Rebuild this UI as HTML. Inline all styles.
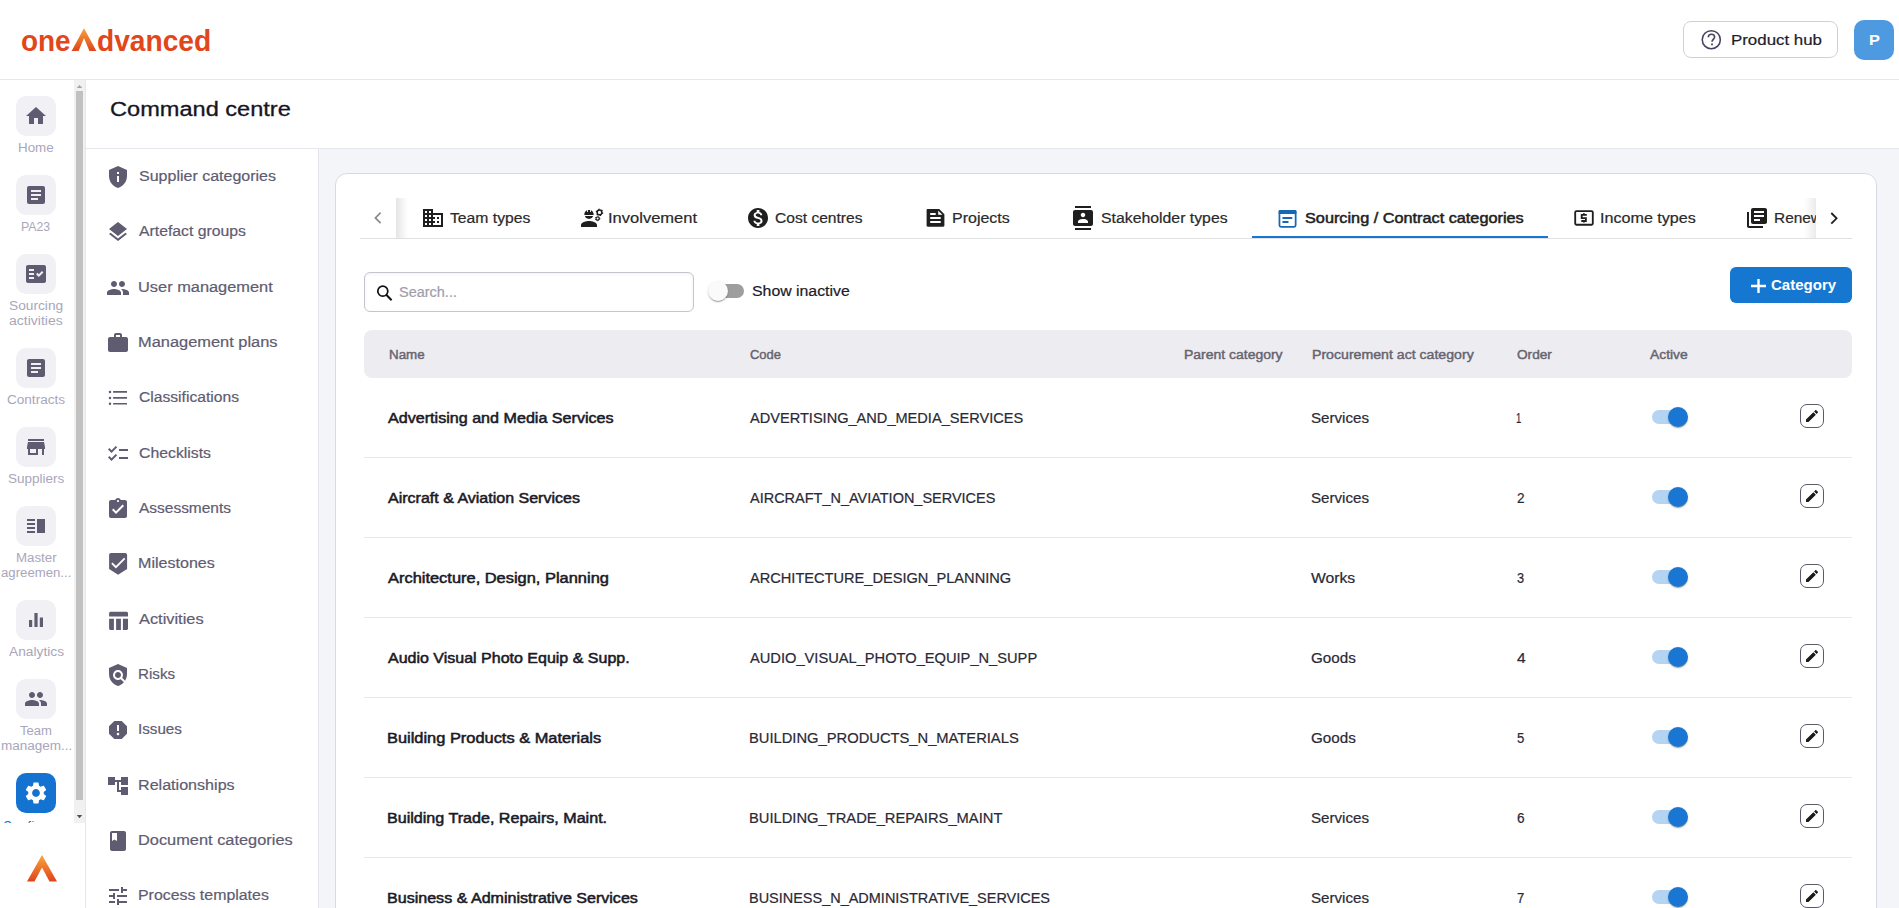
<!DOCTYPE html>
<html><head><meta charset="utf-8">
<style>
*{margin:0;padding:0;box-sizing:border-box}
html,body{width:1899px;height:908px;overflow:hidden;background:#fff;font-family:"Liberation Sans",sans-serif}
.a{position:absolute}
.t{position:absolute;white-space:nowrap}
svg{position:absolute;display:block}
</style></head><body>
<!-- header -->
<div class="a" style="left:0;top:79px;width:1899px;height:1px;background:#e6e6ef"></div>
<!-- rail -->
<div class="a" style="left:85px;top:80px;width:1px;height:828px;background:#e6e6ef"></div>
<!-- title bar -->
<div class="a" style="left:86px;top:148px;width:1813px;height:1px;background:#e6e6ef"></div>
<!-- submenu border -->
<div class="a" style="left:318px;top:149px;width:1px;height:759px;background:#e6e6ef"></div>
<!-- content bg -->
<div class="a" style="left:319px;top:149px;width:1580px;height:759px;background:#f4f5f9"></div>
<!-- card -->
<div class="a" style="left:335px;top:173px;width:1542px;height:760px;background:#fff;border:1px solid #d9d9e6;border-radius:12px"></div>
<svg style="left:0;top:0" width="120" height="60" viewBox="0 0 120 60">
<defs><linearGradient id="lg" x1="0" y1="0" x2="0" y2="1"><stop offset="0" stop-color="#f7a23b"/><stop offset="1" stop-color="#e1441c"/></linearGradient></defs>
<path d="M71.6 51 L84 28.2 L96.4 51 L89.4 51 L84 38 L78.6 51 Z" fill="url(#lg)"/>
</svg>
<div class="a" style="left:1683px;top:21px;width:155px;height:37px;border:1px solid #cfd0de;border-radius:8px;background:#fff"></div>
<svg style="left:1700px;top:28px;" width="24" height="24" viewBox="0 0 24 24"><circle cx="11.3" cy="11.7" r="9.05" fill="none" stroke="#474360" stroke-width="1.55"/><path d="M8.3 9.3 C8.3 7.3 9.8 6.2 11.5 6.2 C13.3 6.2 14.6 7.4 14.6 9 C14.6 10.9 12.2 11.3 12 13.8" fill="none" stroke="#474360" stroke-width="1.6"/><rect x="11.1" y="15.5" width="1.8" height="1.8" fill="#474360"/></svg>
<div class="a" style="left:1854px;top:20px;width:40px;height:40px;background:#4d9ae0;border-radius:10px"></div>
<div class="a" style="left:16px;top:96px;width:40px;height:40px;background:#f1f0f5;border-radius:10px"></div>
<svg style="left:24px;top:104px;" width="24" height="24" viewBox="0 0 24 24"><path fill="#5f5c72" d="M10 20v-6h4v6h5v-8h3L12 3 2 12h3v8z"/></svg>
<div class="a" style="left:16px;top:175px;width:40px;height:40px;background:#f1f0f5;border-radius:10px"></div>
<svg style="left:24px;top:183px;" width="24" height="24" viewBox="0 0 24 24"><path fill="#5f5c72" d="M19 3H5c-1.1 0-2 .9-2 2v14c0 1.1.9 2 2 2h14c1.1 0 2-.9 2-2V5c0-1.1-.9-2-2-2zm-5 14H7v-2h7v2zm3-4H7v-2h10v2zm0-4H7V7h10v2z"/></svg>
<div class="a" style="left:16px;top:254px;width:40px;height:40px;background:#f1f0f5;border-radius:10px"></div>
<svg style="left:24px;top:262px;" width="24" height="24" viewBox="0 0 24 24"><path fill="#5f5c72" d="M20 3H4c-1.1 0-2 .9-2 2v14c0 1.1.9 2 2 2h16c1.1 0 2-.9 2-2V5c0-1.1-.9-2-2-2zM10 17H5v-2h5v2zm0-4H5v-2h5v2zm0-4H5V7h5v2zm4.82 6L12 12.16l1.41-1.41 1.41 1.42L17.99 9l1.42 1.42L14.82 15z"/></svg>
<div class="a" style="left:16px;top:348px;width:40px;height:40px;background:#f1f0f5;border-radius:10px"></div>
<svg style="left:24px;top:356px;" width="24" height="24" viewBox="0 0 24 24"><path fill="#5f5c72" d="M19 3H5c-1.1 0-2 .9-2 2v14c0 1.1.9 2 2 2h14c1.1 0 2-.9 2-2V5c0-1.1-.9-2-2-2zm-5 14H7v-2h7v2zm3-4H7v-2h10v2zm0-4H7V7h10v2z"/></svg>
<div class="a" style="left:16px;top:427px;width:40px;height:40px;background:#f1f0f5;border-radius:10px"></div>
<svg style="left:24px;top:435px;" width="24" height="24" viewBox="0 0 24 24"><path fill="#5f5c72" d="M20 4H4v2h16V4zm1 10v-2l-1-5H4l-1 5v2h1v6h10v-6h4v6h2v-6h1zm-9 4H6v-4h6v4z"/></svg>
<div class="a" style="left:16px;top:506px;width:40px;height:40px;background:#f1f0f5;border-radius:10px"></div>
<svg style="left:24px;top:514px;" width="24" height="24" viewBox="0 0 24 24"><path fill="#5f5c72" d="M3 15h8v-2H3v2zm0 4h8v-2H3v2zm0-8h8V9H3v2zm0-6v2h8V5H3zm10 0h8v14h-8V5z"/></svg>
<div class="a" style="left:16px;top:600px;width:40px;height:40px;background:#f1f0f5;border-radius:10px"></div>
<svg style="left:24px;top:608px;" width="24" height="24" viewBox="0 0 24 24"><path fill="#5f5c72" d="M5 12h3.2v7H5zM10.4 5h3.2v14h-3.2zM15.8 9.5H19V19h-3.2z"/></svg>
<div class="a" style="left:16px;top:679px;width:40px;height:40px;background:#f1f0f5;border-radius:10px"></div>
<svg style="left:24px;top:687px;" width="24" height="24" viewBox="0 0 24 24"><path fill="#5f5c72" d="M16 11c1.66 0 2.99-1.34 2.99-3S17.66 5 16 5c-1.66 0-3 1.34-3 3s1.34 3 3 3zm-8 0c1.66 0 2.99-1.34 2.99-3S9.66 5 8 5C6.34 5 5 6.34 5 8s1.34 3 3 3zm0 2c-2.33 0-7 1.17-7 3.5V19h14v-2.5c0-2.33-4.67-3.5-7-3.5zm8 0c-.29 0-.62.02-.97.05 1.16.84 1.97 1.97 1.97 3.45V19h6v-2.5c0-2.33-4.67-3.5-7-3.5z"/></svg>
<div class="a" style="left:16px;top:773px;width:40px;height:40px;background:#1473d0;border-radius:10px"></div>
<svg style="left:23px;top:780px;" width="26" height="26" viewBox="0 0 24 24"><path fill="#ffffff" d="M19.14 12.94c.04-.3.06-.61.06-.94 0-.32-.02-.64-.07-.94l2.03-1.58c.18-.14.23-.41.12-.61l-1.92-3.32c-.12-.22-.37-.29-.59-.22l-2.39.96c-.5-.38-1.03-.7-1.62-.94l-.36-2.54c-.04-.24-.24-.41-.48-.41h-3.84c-.24 0-.43.17-.47.41l-.36 2.54c-.59.24-1.13.57-1.62.94l-2.39-.96c-.22-.08-.47 0-.59.22L2.74 8.87c-.12.21-.08.47.12.61l2.03 1.58c-.05.3-.09.63-.09.94s.02.64.07.94l-2.03 1.58c-.18.14-.23.41-.12.61l1.92 3.32c.12.22.37.29.59.22l2.39-.96c.5.38 1.03.7 1.62.94l.36 2.54c.05.24.24.41.48.41h3.84c.24 0 .44-.17.47-.41l.36-2.54c.59-.24 1.13-.56 1.62-.94l2.39.96c.22.08.47 0 .59-.22l1.92-3.32c.12-.22.07-.47-.12-.61l-2.01-1.58zM12 15.6c-1.98 0-3.6-1.62-3.6-3.6s1.62-3.6 3.6-3.6 3.6 1.62 3.6 3.6-1.62 3.6-3.6 3.6z"/></svg>
<div class="a" style="left:0;top:80px;width:74px;height:743px;overflow:hidden"><div class="t" style="left:3px;top:739.5px;font:400 12px/12px 'Liberation Sans',sans-serif;color:#1473d0;letter-spacing:0.8px">Configure</div></div>
<div class="a" style="left:74px;top:80px;width:11px;height:743px;background:#f1f1f1;"></div>
<div class="a" style="left:76px;top:91px;width:7px;height:709px;background:#c1c1c1;"></div>
<svg style="left:75px;top:84px;" width="9" height="6" viewBox="0 0 9 6"><path d="M1.8 4 L4.5 1 L7.2 4 Z" fill="#a3a3a3"/></svg>
<svg style="left:75px;top:814px;" width="9" height="6" viewBox="0 0 9 6"><path d="M1.8 1 L4.5 4.2 L7.2 1 Z" fill="#505050"/></svg>
<svg style="left:26px;top:854px" width="32" height="29" viewBox="0 0 32 29">
<defs><linearGradient id="lg2" x1="0" y1="0" x2="0" y2="1"><stop offset="0" stop-color="#f9a63c"/><stop offset="1" stop-color="#e0431b"/></linearGradient></defs>
<path d="M1 27.5 L16 1 L31 27.5 L23.5 27.5 L16 13.5 L8.5 27.5 Z" fill="url(#lg2)"/></svg>
<svg style="left:106px;top:165px;" width="24" height="24" viewBox="0 0 24 24"><path fill="#5f5c72" d="M12 1L3 5v6c0 5.55 3.84 10.74 9 12 5.16-1.26 9-6.45 9-12V5l-9-4zm1 16h-2v-6h2v6zm0-8h-2V7h2v2z"/></svg>
<svg style="left:106px;top:220px;" width="24" height="24" viewBox="0 0 24 24"><path fill="#5f5c72" d="M11.99 18.54l-7.37-5.73L3 14.07l9 7 9-7-1.63-1.27-7.38 5.74zM12 16l7.36-5.73L21 9l-9-7-9 7 1.63 1.27L12 16z"/></svg>
<svg style="left:106px;top:276px;" width="24" height="24" viewBox="0 0 24 24"><path fill="#5f5c72" d="M16 11c1.66 0 2.99-1.34 2.99-3S17.66 5 16 5c-1.66 0-3 1.34-3 3s1.34 3 3 3zm-8 0c1.66 0 2.99-1.34 2.99-3S9.66 5 8 5C6.34 5 5 6.34 5 8s1.34 3 3 3zm0 2c-2.33 0-7 1.17-7 3.5V19h14v-2.5c0-2.33-4.67-3.5-7-3.5zm8 0c-.29 0-.62.02-.97.05 1.16.84 1.97 1.97 1.97 3.45V19h6v-2.5c0-2.33-4.67-3.5-7-3.5z"/></svg>
<svg style="left:106px;top:331px;" width="24" height="24" viewBox="0 0 24 24"><path fill="#5f5c72" d="M20 6h-4V4c0-1.11-.89-2-2-2h-4c-1.11 0-2 .89-2 2v2H4c-1.11 0-1.99.89-1.99 2L2 19c0 1.11.89 2 2 2h16c1.11 0 2-.89 2-2V8c0-1.11-.89-2-2-2zm-6 0h-4V4h4v2z"/></svg>
<svg style="left:106px;top:385px;" width="24" height="24" viewBox="0 0 24 24"><path fill="#5f5c72" d="M4 5.65a1.25 1.25 0 1 0 0 2.5a1.25 1.25 0 1 0 0-2.5zM4 11.65a1.25 1.25 0 1 0 0 2.5a1.25 1.25 0 1 0 0-2.5zM4 17.55a1.25 1.25 0 1 0 0 2.5a1.25 1.25 0 1 0 0-2.5zM7.1 6.1h13.9v1.6H7.1zM7.1 12.1h13.9v1.6H7.1zM7.1 18h13.9v1.6H7.1z"/></svg>
<svg style="left:106px;top:442px;" width="24" height="24" viewBox="0 0 24 24"><path fill="#5f5c72" d="M22 7h-9v2h9V7zm0 8h-9v2h9v-2zM5.54 11L2 7.46l1.41-1.41 2.12 2.12 4.24-4.24 1.41 1.41L5.54 11zm0 8L2 15.46l1.41-1.41 2.12 2.12 4.24-4.24 1.41 1.41L5.54 19z"/></svg>
<svg style="left:106px;top:497px;" width="24" height="24" viewBox="0 0 24 24"><path fill="#5f5c72" d="M19 3h-4.18C14.4 1.84 13.3 1 12 1c-1.3 0-2.4.84-2.82 2H5c-1.1 0-2 .9-2 2v14c0 1.1.9 2 2 2h14c1.1 0 2-.9 2-2V5c0-1.1-.9-2-2-2zm-7 0c.55 0 1 .45 1 1s-.45 1-1 1-1-.45-1-1 .45-1 1-1zm-2 14l-4-4 1.41-1.41L10 14.17l6.59-6.59L18 9l-8 8z"/></svg>
<svg style="left:106px;top:551px;" width="24" height="24" viewBox="0 0 24 24"><path fill="#5f5c72" d="M5 2.1h14.2c1 0 1.9.9 1.9 1.9v13.9l-9 5.8-9-5.8V4c0-1 .9-1.9 1.9-1.9z"/><path d="M5.9 12.2L9.9 16.2L18.7 7.4" fill="none" stroke="#fff" stroke-width="1.8"/></svg>
<svg style="left:106px;top:608px;" width="24" height="24" viewBox="0 0 24 24"><path fill="#5f5c72" d="M3.1 5.3c0-.8.7-1.5 1.5-1.5h15.9c.8 0 1.5.7 1.5 1.5v3.3H3.1zM3.1 10.8h4.8v11.1H4.6c-.8 0-1.5-.7-1.5-1.5zM10.1 10.8h4.8v11.1h-4.8zM16.9 10.8H22v9.6c0 .8-.7 1.5-1.5 1.5h-3.6z"/></svg>
<svg style="left:106px;top:663px;" width="24" height="24" viewBox="0 0 24 24"><path fill="#5f5c72" d="M21 5l-9-4-9 4v6c0 5.55 3.84 10.74 9 12 2.3-.56 4.33-1.9 5.88-3.71l-3.12-3.12c-1.94 1.29-4.58 1.07-6.29-.64-1.95-1.95-1.95-5.12 0-7.07 1.95-1.95 5.12-1.95 7.07 0 1.71 1.71 1.92 4.35.64 6.29l2.9 2.9C20.29 15.69 21 13.38 21 11V5zM12 15c1.66 0 3-1.34 3-3s-1.34-3-3-3-3 1.34-3 3 1.34 3 3 3z"/></svg>
<svg style="left:106px;top:718px;" width="24" height="24" viewBox="0 0 24 24"><path fill="#5f5c72" d="M15.73 3H8.27L3 8.27v7.46L8.27 21h7.46L21 15.73V8.27L15.73 3zM12 17.3c-.72 0-1.3-.58-1.3-1.3 0-.72.58-1.3 1.3-1.3.72 0 1.3.58 1.3 1.3 0 .72-.58 1.3-1.3 1.3zm1-4.3h-2V7h2v6z"/></svg>
<svg style="left:106px;top:774px;" width="24" height="24" viewBox="0 0 24 24"><path fill="#5f5c72" d="M22 11V3h-7v3H9V3H2v8h7V8h2v10h4v3h7v-8h-7v3h-2V8h2v3z"/></svg>
<svg style="left:106px;top:829px;" width="24" height="24" viewBox="0 0 24 24"><path fill="#5f5c72" d="M18 2H6c-1.1 0-2 .9-2 2v16c0 1.1.9 2 2 2h12c1.1 0 2-.9 2-2V4c0-1.1-.9-2-2-2zM6 4h5v8l-2.5-1.5L6 12V4z"/></svg>
<svg style="left:106px;top:884px;" width="24" height="24" viewBox="0 0 24 24"><path fill="#5f5c72" d="M3 17v2h6v-2H3zM3 5v2h10V5H3zm10 16v-2h8v-2h-8v-2h-2v6h2zM7 9v2H3v2h4v2h2V9H7zm14 4v-2H11v2h10zm-6-4h2V7h4V5h-4V3h-2v6z"/></svg>
<div class="a" style="left:360px;top:238px;width:1492px;height:1px;background:#e0e0e0;"></div>
<svg style="left:370px;top:208px;" width="16" height="20" viewBox="0 0 16 20"><path d="M10.6 4.7 L5.4 9.9 L10.6 15.1" fill="none" stroke="#8a8a8a" stroke-width="1.7"/></svg>
<div class="a" style="left:396px;top:198px;width:12px;height:40px;background:linear-gradient(90deg,rgba(0,0,0,0.10),rgba(0,0,0,0))"></div>
<svg style="left:421px;top:206px;" width="24" height="24" viewBox="0 0 24 24"><path fill="#1f1f1f" d="M12 7V3H2v18h20V7H12zM6 19H4v-2h2v2zm0-4H4v-2h2v2zm0-4H4V9h2v2zm0-4H4V5h2v2zm4 12H8v-2h2v2zm0-4H8v-2h2v2zm0-4H8V9h2v2zm0-4H8V5h2v2zm10 12h-8v-2h2v-2h-2v-2h2v-2h-2V9h8v10zm-2-8h-2v2h2v-2zm0 4h-2v2h2v-2z"/></svg>
<svg style="left:580px;top:206px;" width="24" height="24" viewBox="0 0 24 24"><path fill="#1f1f1f" d="M4.3 8.9h9.4c0-2.1-1.1-3.9-2.7-4.6v1.6h-.9V4.1c-.4-.1-.7-.1-1.1-.1s-.7 0-1.1.1v1.8h-.9V4.3C5.4 5 4.3 6.8 4.3 8.9zM5 10.1h8c0 1.6-1.8 2.8-4 2.8s-4-1.2-4-2.8zM9 15c-2.67 0-8 1.34-8 4v2h16v-2c0-2.66-5.33-4-8-4z"/><circle cx="19.5" cy="6.4" r="2.35" fill="none" stroke="#1f1f1f" stroke-width="1.5"/><circle cx="19.5" cy="6.4" r="3.15" fill="none" stroke="#1f1f1f" stroke-width="1.3" stroke-dasharray="1.3 2.0"/><circle cx="17.6" cy="12.6" r="1.6" fill="none" stroke="#1f1f1f" stroke-width="1.2"/><circle cx="17.6" cy="12.6" r="2.2" fill="none" stroke="#1f1f1f" stroke-width="1" stroke-dasharray="1 1.3"/></svg>
<svg style="left:746px;top:206px;" width="24" height="24" viewBox="0 0 24 24"><path fill="#1f1f1f" d="M12 2C6.48 2 2 6.48 2 12s4.48 10 10 10 10-4.48 10-10S17.52 2 12 2zm1.41 16.09V20h-2.67v-1.93c-1.71-.36-3.16-1.46-3.27-3.4h1.96c.1 1.05.82 1.87 2.65 1.87 1.96 0 2.4-.98 2.4-1.59 0-.83-.44-1.61-2.67-2.14-2.48-.6-4.18-1.62-4.18-3.67 0-1.72 1.39-2.84 3.11-3.21V4h2.67v1.95c1.86.45 2.79 1.86 2.85 3.39H14.3c-.05-1.11-.64-1.87-2.22-1.87-1.5 0-2.4.68-2.4 1.64 0 .84.65 1.39 2.67 1.91s4.18 1.39 4.18 3.91c-.01 1.83-1.38 2.83-3.12 3.16z"/></svg>
<svg style="left:920px;top:204px;" width="30" height="28" viewBox="0 0 30 28"><path fill="#1f1f1f" d="M7.8 4.9h11.4l5.2 5.4v11.3c0 .7-.5 1.2-1.2 1.2H7.8c-.7 0-1.2-.5-1.2-1.2V6.1c0-.7.5-1.2 1.2-1.2z"/><path fill="#fff" d="M10.2 9.1h5.5v1.8h-5.5zM10.2 13.1h10.5v1.9H10.2zM10.2 17.1h10.5v1.9H10.2zM18.2 6.8l4.3 4H18.2z"/></svg>
<svg style="left:1071px;top:206px;" width="24" height="24" viewBox="0 0 24 24"><path fill="#1f1f1f" d="M20 0H4v2h16V0zM4 24h16v-2H4v2zM20 4H4c-1.1 0-2 .9-2 2v12c0 1.1.9 2 2 2h16c1.1 0 2-.9 2-2V6c0-1.1-.9-2-2-2zm-8 2.75c1.24 0 2.25 1.01 2.25 2.25s-1.01 2.25-2.25 2.25S9.75 10.24 9.75 9 10.76 6.75 12 6.75zM17 17H7v-1.5c0-1.67 3.33-2.5 5-2.5s5 .83 5 2.5V17z"/></svg>
<svg style="left:1278px;top:209px;" width="20" height="20" viewBox="0 0 20 20"><rect x="1.45" y="1.75" width="16.2" height="16.1" rx="1.6" fill="none" stroke="#1767b8" stroke-width="1.75"/><rect x="0.6" y="0.9" width="17.9" height="4" rx="1.2" fill="#1767b8"/><rect x="4.2" y="8.1" width="10.3" height="1.9" rx=".9" fill="#1767b8"/><rect x="4.2" y="12.1" width="6.5" height="1.9" rx=".9" fill="#1767b8"/></svg>
<div class="a" style="left:1252px;top:236px;width:296px;height:2px;background:#1976d2;"></div>
<svg style="left:1568px;top:204px;" width="30" height="28" viewBox="0 0 30 28"><rect x="7.2" y="7.1" width="17.6" height="13.6" rx="1.2" fill="none" stroke="#1f1f1f" stroke-width="1.85"/><path d="M18.8 10.9H13.7V14.1H17.9V17H13.3M15.9 9.2V10.9M15.9 17V18.6" fill="none" stroke="#1f1f1f" stroke-width="1.8"/></svg>
<svg style="left:1745px;top:206px;" width="24" height="24" viewBox="0 0 24 24"><path fill="#1f1f1f" d="M4 6H2v14c0 1.1.9 2 2 2h14v-2H4V6zm16-4H8c-1.1 0-2 .9-2 2v12c0 1.1.9 2 2 2h12c1.1 0 2-.9 2-2V4c0-1.1-.9-2-2-2zm-1 9H9V9h10v2zm-4 4H9v-2h6v2zm4-8H9V5h10v2z"/></svg>
<div class="a" style="left:364px;top:272px;width:330px;height:40px;border:1px solid #c5c5ce;border-radius:6px;background:#fff;box-shadow:inset 0 1px 3px rgba(0,0,0,0.06)"></div>
<svg style="left:375px;top:283px;" width="20" height="20" viewBox="0 0 20 20"><circle cx="7.8" cy="8.2" r="5.0" fill="none" stroke="#111" stroke-width="1.7"/><path d="M11.3 11.8 L16.6 17.3" stroke="#111" stroke-width="2"/></svg>
<div class="a" style="left:710px;top:284px;width:34px;height:14px;background:#9e9e9e;border-radius:7px"></div>
<div class="a" style="left:708px;top:281px;width:20px;height:20px;border-radius:50%;background:#fafafa;box-shadow:0 2px 1px -1px rgba(0,0,0,.2),0 1px 1px 0 rgba(0,0,0,.14),0 1px 3px 0 rgba(0,0,0,.12)"></div>
<div class="a" style="left:1730px;top:267px;width:122px;height:36px;background:#1677d1;border-radius:6px"></div>
<svg style="left:1750px;top:278px;" width="17" height="16" viewBox="0 0 17 16"><path d="M8.5 1 V15 M1 8 H16" stroke="#fff" stroke-width="2.4"/></svg>
<div class="a" style="left:364px;top:330px;width:1488px;height:48px;background:#ededf1;border-radius:8px"></div>
<div class="a" style="left:364px;top:457px;width:1488px;height:1px;background:#e7e7ee;"></div>
<div class="a" style="left:1652px;top:410px;width:34px;height:14px;background:#b5d4f1;border-radius:7px"></div>
<div class="a" style="left:1668px;top:407px;width:20px;height:20px;border-radius:50%;background:#1976d2;box-shadow:0 2px 1px -1px rgba(0,0,0,.2),0 1px 1px 0 rgba(0,0,0,.14),0 1px 3px 0 rgba(0,0,0,.12)"></div>
<div class="a" style="left:1800px;top:404px;width:24px;height:24px;border:1px solid #5b5a6a;border-radius:7px"></div>
<svg style="left:1804px;top:408px;" width="16" height="16" viewBox="0 0 24 24"><path fill="#1a1a1a" d="M3 17.25V21h3.75L17.81 9.94l-3.75-3.75L3 17.25zM20.71 7.04c.39-.39.39-1.02 0-1.41l-2.34-2.34c-.39-.39-1.02-.39-1.41 0l-1.83 1.83 3.75 3.75 1.83-1.83z"/></svg>
<div class="a" style="left:364px;top:537px;width:1488px;height:1px;background:#e7e7ee;"></div>
<div class="a" style="left:1652px;top:490px;width:34px;height:14px;background:#b5d4f1;border-radius:7px"></div>
<div class="a" style="left:1668px;top:487px;width:20px;height:20px;border-radius:50%;background:#1976d2;box-shadow:0 2px 1px -1px rgba(0,0,0,.2),0 1px 1px 0 rgba(0,0,0,.14),0 1px 3px 0 rgba(0,0,0,.12)"></div>
<div class="a" style="left:1800px;top:484px;width:24px;height:24px;border:1px solid #5b5a6a;border-radius:7px"></div>
<svg style="left:1804px;top:488px;" width="16" height="16" viewBox="0 0 24 24"><path fill="#1a1a1a" d="M3 17.25V21h3.75L17.81 9.94l-3.75-3.75L3 17.25zM20.71 7.04c.39-.39.39-1.02 0-1.41l-2.34-2.34c-.39-.39-1.02-.39-1.41 0l-1.83 1.83 3.75 3.75 1.83-1.83z"/></svg>
<div class="a" style="left:364px;top:617px;width:1488px;height:1px;background:#e7e7ee;"></div>
<div class="a" style="left:1652px;top:570px;width:34px;height:14px;background:#b5d4f1;border-radius:7px"></div>
<div class="a" style="left:1668px;top:567px;width:20px;height:20px;border-radius:50%;background:#1976d2;box-shadow:0 2px 1px -1px rgba(0,0,0,.2),0 1px 1px 0 rgba(0,0,0,.14),0 1px 3px 0 rgba(0,0,0,.12)"></div>
<div class="a" style="left:1800px;top:564px;width:24px;height:24px;border:1px solid #5b5a6a;border-radius:7px"></div>
<svg style="left:1804px;top:568px;" width="16" height="16" viewBox="0 0 24 24"><path fill="#1a1a1a" d="M3 17.25V21h3.75L17.81 9.94l-3.75-3.75L3 17.25zM20.71 7.04c.39-.39.39-1.02 0-1.41l-2.34-2.34c-.39-.39-1.02-.39-1.41 0l-1.83 1.83 3.75 3.75 1.83-1.83z"/></svg>
<div class="a" style="left:364px;top:697px;width:1488px;height:1px;background:#e7e7ee;"></div>
<div class="a" style="left:1652px;top:650px;width:34px;height:14px;background:#b5d4f1;border-radius:7px"></div>
<div class="a" style="left:1668px;top:647px;width:20px;height:20px;border-radius:50%;background:#1976d2;box-shadow:0 2px 1px -1px rgba(0,0,0,.2),0 1px 1px 0 rgba(0,0,0,.14),0 1px 3px 0 rgba(0,0,0,.12)"></div>
<div class="a" style="left:1800px;top:644px;width:24px;height:24px;border:1px solid #5b5a6a;border-radius:7px"></div>
<svg style="left:1804px;top:648px;" width="16" height="16" viewBox="0 0 24 24"><path fill="#1a1a1a" d="M3 17.25V21h3.75L17.81 9.94l-3.75-3.75L3 17.25zM20.71 7.04c.39-.39.39-1.02 0-1.41l-2.34-2.34c-.39-.39-1.02-.39-1.41 0l-1.83 1.83 3.75 3.75 1.83-1.83z"/></svg>
<div class="a" style="left:364px;top:777px;width:1488px;height:1px;background:#e7e7ee;"></div>
<div class="a" style="left:1652px;top:730px;width:34px;height:14px;background:#b5d4f1;border-radius:7px"></div>
<div class="a" style="left:1668px;top:727px;width:20px;height:20px;border-radius:50%;background:#1976d2;box-shadow:0 2px 1px -1px rgba(0,0,0,.2),0 1px 1px 0 rgba(0,0,0,.14),0 1px 3px 0 rgba(0,0,0,.12)"></div>
<div class="a" style="left:1800px;top:724px;width:24px;height:24px;border:1px solid #5b5a6a;border-radius:7px"></div>
<svg style="left:1804px;top:728px;" width="16" height="16" viewBox="0 0 24 24"><path fill="#1a1a1a" d="M3 17.25V21h3.75L17.81 9.94l-3.75-3.75L3 17.25zM20.71 7.04c.39-.39.39-1.02 0-1.41l-2.34-2.34c-.39-.39-1.02-.39-1.41 0l-1.83 1.83 3.75 3.75 1.83-1.83z"/></svg>
<div class="a" style="left:364px;top:857px;width:1488px;height:1px;background:#e7e7ee;"></div>
<div class="a" style="left:1652px;top:810px;width:34px;height:14px;background:#b5d4f1;border-radius:7px"></div>
<div class="a" style="left:1668px;top:807px;width:20px;height:20px;border-radius:50%;background:#1976d2;box-shadow:0 2px 1px -1px rgba(0,0,0,.2),0 1px 1px 0 rgba(0,0,0,.14),0 1px 3px 0 rgba(0,0,0,.12)"></div>
<div class="a" style="left:1800px;top:804px;width:24px;height:24px;border:1px solid #5b5a6a;border-radius:7px"></div>
<svg style="left:1804px;top:808px;" width="16" height="16" viewBox="0 0 24 24"><path fill="#1a1a1a" d="M3 17.25V21h3.75L17.81 9.94l-3.75-3.75L3 17.25zM20.71 7.04c.39-.39.39-1.02 0-1.41l-2.34-2.34c-.39-.39-1.02-.39-1.41 0l-1.83 1.83 3.75 3.75 1.83-1.83z"/></svg>
<div class="a" style="left:1652px;top:890px;width:34px;height:14px;background:#b5d4f1;border-radius:7px"></div>
<div class="a" style="left:1668px;top:887px;width:20px;height:20px;border-radius:50%;background:#1976d2;box-shadow:0 2px 1px -1px rgba(0,0,0,.2),0 1px 1px 0 rgba(0,0,0,.14),0 1px 3px 0 rgba(0,0,0,.12)"></div>
<div class="a" style="left:1800px;top:884px;width:24px;height:24px;border:1px solid #5b5a6a;border-radius:7px"></div>
<svg style="left:1804px;top:888px;" width="16" height="16" viewBox="0 0 24 24"><path fill="#1a1a1a" d="M3 17.25V21h3.75L17.81 9.94l-3.75-3.75L3 17.25zM20.71 7.04c.39-.39.39-1.02 0-1.41l-2.34-2.34c-.39-.39-1.02-.39-1.41 0l-1.83 1.83 3.75 3.75 1.83-1.83z"/></svg>
<div class="t" style="left:20.84px;top:27.00px;font:700 29px/29px 'Liberation Sans',sans-serif;color:#e2461b;transform:scaleX(0.9618);transform-origin:0 0;">one</div>
<div class="t" style="left:97.23px;top:27.00px;font:700 29px/29px 'Liberation Sans',sans-serif;color:#e2461b;transform:scaleX(0.9709);transform-origin:0 0;">dvanced</div>
<div class="t" style="left:1773.60px;top:210.70px;font:400 14px/14px 'Liberation Sans',sans-serif;color:#2a2a2a;transform:scaleX(1.1013);transform-origin:0 0;-webkit-text-stroke:0.2px #2a2a2a">Renewals</div>
<div class="t" style="left:1730.80px;top:32.80px;font:400 14px/14px 'Liberation Sans',sans-serif;color:#1f1d2e;transform:scaleX(1.2047);transform-origin:0 0;-webkit-text-stroke:0.2px #1f1d2e">Product hub</div>
<div class="t" style="left:1868.60px;top:33.40px;font:700 14px/14px 'Liberation Sans',sans-serif;color:#ffffff;transform:scaleX(1.1667);transform-origin:0 0;">P</div>
<div class="t" style="left:110.12px;top:98.80px;font:400 20px/20px 'Liberation Sans',sans-serif;color:#161523;transform:scaleX(1.1788);transform-origin:0 0;-webkit-text-stroke:0.3px #161523">Command centre</div>
<div class="t" style="left:18.00px;top:141.70px;font:400 12px/12px 'Liberation Sans',sans-serif;color:#a9a6bb;transform:scaleX(1.1133);transform-origin:0 0;">Home</div>
<div class="t" style="left:21.25px;top:221.00px;font:400 12px/12px 'Liberation Sans',sans-serif;color:#a9a6bb;transform:scaleX(1.0246);transform-origin:0 0;">PA23</div>
<div class="t" style="left:9.30px;top:299.80px;font:400 12px/12px 'Liberation Sans',sans-serif;color:#a9a6bb;transform:scaleX(1.1438);transform-origin:0 0;">Sourcing</div>
<div class="t" style="left:9.15px;top:314.80px;font:400 12px/12px 'Liberation Sans',sans-serif;color:#a9a6bb;transform:scaleX(1.1670);transform-origin:0 0;">activities</div>
<div class="t" style="left:7.00px;top:394.00px;font:400 12px/12px 'Liberation Sans',sans-serif;color:#a9a6bb;transform:scaleX(1.1295);transform-origin:0 0;">Contracts</div>
<div class="t" style="left:7.85px;top:473.00px;font:400 12px/12px 'Liberation Sans',sans-serif;color:#a9a6bb;transform:scaleX(1.1254);transform-origin:0 0;">Suppliers</div>
<div class="t" style="left:15.70px;top:552.00px;font:400 12px/12px 'Liberation Sans',sans-serif;color:#a9a6bb;transform:scaleX(1.1069);transform-origin:0 0;">Master</div>
<div class="t" style="left:1.00px;top:567.00px;font:400 12px/12px 'Liberation Sans',sans-serif;color:#a9a6bb;transform:scaleX(1.0988);transform-origin:0 0;">agreemen...</div>
<div class="t" style="left:8.50px;top:646.00px;font:400 12px/12px 'Liberation Sans',sans-serif;color:#a9a6bb;transform:scaleX(1.1454);transform-origin:0 0;">Analytics</div>
<div class="t" style="left:20.00px;top:725.00px;font:400 12px/12px 'Liberation Sans',sans-serif;color:#a9a6bb;transform:scaleX(1.0904);transform-origin:0 0;">Team</div>
<div class="t" style="left:0.50px;top:740.00px;font:400 12px/12px 'Liberation Sans',sans-serif;color:#a9a6bb;transform:scaleX(1.1265);transform-origin:0 0;">managem...</div>
<div class="t" style="left:139.40px;top:169.00px;font:400 14px/14px 'Liberation Sans',sans-serif;color:#5f5c72;transform:scaleX(1.1431);transform-origin:0 0;-webkit-text-stroke:0.2px #5f5c72">Supplier categories</div>
<div class="t" style="left:139.40px;top:224.33px;font:400 14px/14px 'Liberation Sans',sans-serif;color:#5f5c72;transform:scaleX(1.1271);transform-origin:0 0;-webkit-text-stroke:0.2px #5f5c72">Artefact groups</div>
<div class="t" style="left:138.23px;top:279.66px;font:400 14px/14px 'Liberation Sans',sans-serif;color:#5f5c72;transform:scaleX(1.1700);transform-origin:0 0;-webkit-text-stroke:0.2px #5f5c72">User management</div>
<div class="t" style="left:138.23px;top:334.99px;font:400 14px/14px 'Liberation Sans',sans-serif;color:#5f5c72;transform:scaleX(1.1713);transform-origin:0 0;-webkit-text-stroke:0.2px #5f5c72">Management plans</div>
<div class="t" style="left:139.40px;top:390.32px;font:400 14px/14px 'Liberation Sans',sans-serif;color:#5f5c72;transform:scaleX(1.1176);transform-origin:0 0;-webkit-text-stroke:0.2px #5f5c72">Classifications</div>
<div class="t" style="left:139.40px;top:445.65px;font:400 14px/14px 'Liberation Sans',sans-serif;color:#5f5c72;transform:scaleX(1.1287);transform-origin:0 0;-webkit-text-stroke:0.2px #5f5c72">Checklists</div>
<div class="t" style="left:139.40px;top:500.98px;font:400 14px/14px 'Liberation Sans',sans-serif;color:#5f5c72;transform:scaleX(1.1051);transform-origin:0 0;-webkit-text-stroke:0.2px #5f5c72">Assessments</div>
<div class="t" style="left:138.25px;top:556.31px;font:400 14px/14px 'Liberation Sans',sans-serif;color:#5f5c72;transform:scaleX(1.1484);transform-origin:0 0;-webkit-text-stroke:0.2px #5f5c72">Milestones</div>
<div class="t" style="left:139.40px;top:611.64px;font:400 14px/14px 'Liberation Sans',sans-serif;color:#5f5c72;transform:scaleX(1.1696);transform-origin:0 0;-webkit-text-stroke:0.2px #5f5c72">Activities</div>
<div class="t" style="left:138.32px;top:666.97px;font:400 14px/14px 'Liberation Sans',sans-serif;color:#5f5c72;transform:scaleX(1.0837);transform-origin:0 0;-webkit-text-stroke:0.2px #5f5c72">Risks</div>
<div class="t" style="left:138.32px;top:722.30px;font:400 14px/14px 'Liberation Sans',sans-serif;color:#5f5c72;transform:scaleX(1.0846);transform-origin:0 0;-webkit-text-stroke:0.2px #5f5c72">Issues</div>
<div class="t" style="left:138.25px;top:777.63px;font:400 14px/14px 'Liberation Sans',sans-serif;color:#5f5c72;transform:scaleX(1.1499);transform-origin:0 0;-webkit-text-stroke:0.2px #5f5c72">Relationships</div>
<div class="t" style="left:138.23px;top:832.96px;font:400 14px/14px 'Liberation Sans',sans-serif;color:#5f5c72;transform:scaleX(1.1692);transform-origin:0 0;-webkit-text-stroke:0.2px #5f5c72">Document categories</div>
<div class="t" style="left:138.26px;top:888.29px;font:400 14px/14px 'Liberation Sans',sans-serif;color:#5f5c72;transform:scaleX(1.1361);transform-origin:0 0;-webkit-text-stroke:0.2px #5f5c72">Process templates</div>
<div class="t" style="left:450.00px;top:210.70px;font:400 14px/14px 'Liberation Sans',sans-serif;color:#2a2a2a;transform:scaleX(1.1231);transform-origin:0 0;-webkit-text-stroke:0.2px #2a2a2a">Team types</div>
<div class="t" style="left:607.82px;top:210.70px;font:400 14px/14px 'Liberation Sans',sans-serif;color:#2a2a2a;transform:scaleX(1.1797);transform-origin:0 0;-webkit-text-stroke:0.2px #2a2a2a">Involvement</div>
<div class="t" style="left:775.00px;top:210.70px;font:400 14px/14px 'Liberation Sans',sans-serif;color:#2a2a2a;transform:scaleX(1.1134);transform-origin:0 0;-webkit-text-stroke:0.2px #2a2a2a">Cost centres</div>
<div class="t" style="left:952.26px;top:210.70px;font:400 14px/14px 'Liberation Sans',sans-serif;color:#2a2a2a;transform:scaleX(1.1418);transform-origin:0 0;-webkit-text-stroke:0.2px #2a2a2a">Projects</div>
<div class="t" style="left:1100.50px;top:210.70px;font:400 14px/14px 'Liberation Sans',sans-serif;color:#2a2a2a;transform:scaleX(1.1297);transform-origin:0 0;-webkit-text-stroke:0.2px #2a2a2a">Stakeholder types</div>
<div class="t" style="left:1600.45px;top:210.70px;font:400 14px/14px 'Liberation Sans',sans-serif;color:#2a2a2a;transform:scaleX(1.1512);transform-origin:0 0;-webkit-text-stroke:0.2px #2a2a2a">Income types</div>
<div class="t" style="left:1304.70px;top:210.70px;font:400 14px/14px 'Liberation Sans',sans-serif;color:#1f1f1f;transform:scaleX(1.1613);transform-origin:0 0;-webkit-text-stroke:0.5px #1f1f1f">Sourcing / Contract categories</div>
<div class="t" style="left:398.80px;top:284.70px;font:400 14px/14px 'Liberation Sans',sans-serif;color:#9f9dab;transform:scaleX(1.0338);transform-origin:0 0;-webkit-text-stroke:0.2px #9f9dab">Search...</div>
<div class="t" style="left:752.00px;top:283.80px;font:400 14px/14px 'Liberation Sans',sans-serif;color:#1c1b29;transform:scaleX(1.1317);transform-origin:0 0;-webkit-text-stroke:0.2px #1c1b29">Show inactive</div>
<div class="t" style="left:1771.00px;top:278.10px;font:700 14px/14px 'Liberation Sans',sans-serif;color:#ffffff;transform:scaleX(1.0723);transform-origin:0 0;">Category</div>
<div class="t" style="left:388.50px;top:348.70px;font:400 12px/12px 'Liberation Sans',sans-serif;color:#66636f;transform:scaleX(1.1133);transform-origin:0 0;-webkit-text-stroke:0.4px #66636f">Name</div>
<div class="t" style="left:750.00px;top:348.70px;font:400 12px/12px 'Liberation Sans',sans-serif;color:#66636f;transform:scaleX(1.0788);transform-origin:0 0;-webkit-text-stroke:0.4px #66636f">Code</div>
<div class="t" style="left:1184.30px;top:348.70px;font:400 12px/12px 'Liberation Sans',sans-serif;color:#66636f;transform:scaleX(1.1639);transform-origin:0 0;-webkit-text-stroke:0.4px #66636f">Parent category</div>
<div class="t" style="left:1311.60px;top:348.70px;font:400 12px/12px 'Liberation Sans',sans-serif;color:#66636f;transform:scaleX(1.1769);transform-origin:0 0;-webkit-text-stroke:0.4px #66636f">Procurement act category</div>
<div class="t" style="left:1516.90px;top:348.70px;font:400 12px/12px 'Liberation Sans',sans-serif;color:#66636f;transform:scaleX(1.1376);transform-origin:0 0;-webkit-text-stroke:0.4px #66636f">Order</div>
<div class="t" style="left:1650.40px;top:348.70px;font:400 12px/12px 'Liberation Sans',sans-serif;color:#66636f;transform:scaleX(1.1544);transform-origin:0 0;-webkit-text-stroke:0.4px #66636f">Active</div>
<div class="t" style="left:388.40px;top:411.30px;font:400 14px/14px 'Liberation Sans',sans-serif;color:#1a1926;transform:scaleX(1.1505);transform-origin:0 0;-webkit-text-stroke:0.5px #1a1926">Advertising and Media Services</div>
<div class="t" style="left:750.40px;top:411.30px;font:400 14px/14px 'Liberation Sans',sans-serif;color:#2a2936;transform:scaleX(1.0408);transform-origin:0 0;-webkit-text-stroke:0.2px #2a2936">ADVERTISING_AND_MEDIA_SERVICES</div>
<div class="t" style="left:1311.40px;top:411.30px;font:400 14px/14px 'Liberation Sans',sans-serif;color:#2a2936;transform:scaleX(1.0804);transform-origin:0 0;-webkit-text-stroke:0.2px #2a2936">Services</div>
<div class="t" style="left:1516.33px;top:411.30px;font:400 14px/14px 'Liberation Sans',sans-serif;color:#2a2936;transform:scaleX(0.6714);transform-origin:0 0;-webkit-text-stroke:0.2px #2a2936">1</div>
<div class="t" style="left:388.40px;top:491.30px;font:400 14px/14px 'Liberation Sans',sans-serif;color:#1a1926;transform:scaleX(1.1437);transform-origin:0 0;-webkit-text-stroke:0.5px #1a1926">Aircraft &amp; Aviation Services</div>
<div class="t" style="left:750.40px;top:491.30px;font:400 14px/14px 'Liberation Sans',sans-serif;color:#2a2936;transform:scaleX(1.0340);transform-origin:0 0;-webkit-text-stroke:0.2px #2a2936">AIRCRAFT_N_AVIATION_SERVICES</div>
<div class="t" style="left:1311.40px;top:491.30px;font:400 14px/14px 'Liberation Sans',sans-serif;color:#2a2936;transform:scaleX(1.0804);transform-origin:0 0;-webkit-text-stroke:0.2px #2a2936">Services</div>
<div class="t" style="left:1517.00px;top:491.30px;font:400 14px/14px 'Liberation Sans',sans-serif;color:#2a2936;transform:scaleX(0.9750);transform-origin:0 0;-webkit-text-stroke:0.2px #2a2936">2</div>
<div class="t" style="left:388.40px;top:571.30px;font:400 14px/14px 'Liberation Sans',sans-serif;color:#1a1926;transform:scaleX(1.1731);transform-origin:0 0;-webkit-text-stroke:0.5px #1a1926">Architecture, Design, Planning</div>
<div class="t" style="left:750.40px;top:571.30px;font:400 14px/14px 'Liberation Sans',sans-serif;color:#2a2936;transform:scaleX(1.0425);transform-origin:0 0;-webkit-text-stroke:0.2px #2a2936">ARCHITECTURE_DESIGN_PLANNING</div>
<div class="t" style="left:1311.40px;top:571.30px;font:400 14px/14px 'Liberation Sans',sans-serif;color:#2a2936;transform:scaleX(1.1216);transform-origin:0 0;-webkit-text-stroke:0.2px #2a2936">Works</div>
<div class="t" style="left:1517.00px;top:571.30px;font:400 14px/14px 'Liberation Sans',sans-serif;color:#2a2936;transform:scaleX(0.9125);transform-origin:0 0;-webkit-text-stroke:0.2px #2a2936">3</div>
<div class="t" style="left:388.40px;top:651.30px;font:400 14px/14px 'Liberation Sans',sans-serif;color:#1a1926;transform:scaleX(1.1427);transform-origin:0 0;-webkit-text-stroke:0.5px #1a1926">Audio Visual Photo Equip &amp; Supp.</div>
<div class="t" style="left:750.40px;top:651.30px;font:400 14px/14px 'Liberation Sans',sans-serif;color:#2a2936;transform:scaleX(1.0465);transform-origin:0 0;-webkit-text-stroke:0.2px #2a2936">AUDIO_VISUAL_PHOTO_EQUIP_N_SUPP</div>
<div class="t" style="left:1311.40px;top:651.30px;font:400 14px/14px 'Liberation Sans',sans-serif;color:#2a2936;transform:scaleX(1.0861);transform-origin:0 0;-webkit-text-stroke:0.2px #2a2936">Goods</div>
<div class="t" style="left:1517.00px;top:651.30px;font:400 14px/14px 'Liberation Sans',sans-serif;color:#2a2936;transform:scaleX(1.1125);transform-origin:0 0;-webkit-text-stroke:0.2px #2a2936">4</div>
<div class="t" style="left:387.23px;top:731.30px;font:400 14px/14px 'Liberation Sans',sans-serif;color:#1a1926;transform:scaleX(1.1712);transform-origin:0 0;-webkit-text-stroke:0.5px #1a1926">Building Products &amp; Materials</div>
<div class="t" style="left:749.35px;top:731.30px;font:400 14px/14px 'Liberation Sans',sans-serif;color:#2a2936;transform:scaleX(1.0516);transform-origin:0 0;-webkit-text-stroke:0.2px #2a2936">BUILDING_PRODUCTS_N_MATERIALS</div>
<div class="t" style="left:1311.40px;top:731.30px;font:400 14px/14px 'Liberation Sans',sans-serif;color:#2a2936;transform:scaleX(1.0861);transform-origin:0 0;-webkit-text-stroke:0.2px #2a2936">Goods</div>
<div class="t" style="left:1517.00px;top:731.30px;font:400 14px/14px 'Liberation Sans',sans-serif;color:#2a2936;transform:scaleX(0.9375);transform-origin:0 0;-webkit-text-stroke:0.2px #2a2936">5</div>
<div class="t" style="left:387.25px;top:811.30px;font:400 14px/14px 'Liberation Sans',sans-serif;color:#1a1926;transform:scaleX(1.1497);transform-origin:0 0;-webkit-text-stroke:0.5px #1a1926">Building Trade, Repairs, Maint.</div>
<div class="t" style="left:749.35px;top:811.30px;font:400 14px/14px 'Liberation Sans',sans-serif;color:#2a2936;transform:scaleX(1.0518);transform-origin:0 0;-webkit-text-stroke:0.2px #2a2936">BUILDING_TRADE_REPAIRS_MAINT</div>
<div class="t" style="left:1311.40px;top:811.30px;font:400 14px/14px 'Liberation Sans',sans-serif;color:#2a2936;transform:scaleX(1.0804);transform-origin:0 0;-webkit-text-stroke:0.2px #2a2936">Services</div>
<div class="t" style="left:1517.00px;top:811.30px;font:400 14px/14px 'Liberation Sans',sans-serif;color:#2a2936;transform:scaleX(0.9750);transform-origin:0 0;-webkit-text-stroke:0.2px #2a2936">6</div>
<div class="t" style="left:387.25px;top:891.30px;font:400 14px/14px 'Liberation Sans',sans-serif;color:#1a1926;transform:scaleX(1.1474);transform-origin:0 0;-webkit-text-stroke:0.5px #1a1926">Business &amp; Administrative Services</div>
<div class="t" style="left:749.37px;top:891.30px;font:400 14px/14px 'Liberation Sans',sans-serif;color:#2a2936;transform:scaleX(1.0335);transform-origin:0 0;-webkit-text-stroke:0.2px #2a2936">BUSINESS_N_ADMINISTRATIVE_SERVICES</div>
<div class="t" style="left:1311.40px;top:891.30px;font:400 14px/14px 'Liberation Sans',sans-serif;color:#2a2936;transform:scaleX(1.0804);transform-origin:0 0;-webkit-text-stroke:0.2px #2a2936">Services</div>
<div class="t" style="left:1517.00px;top:891.30px;font:400 14px/14px 'Liberation Sans',sans-serif;color:#2a2936;transform:scaleX(0.9375);transform-origin:0 0;-webkit-text-stroke:0.2px #2a2936">7</div>
<div class="a" style="left:1816px;top:198px;width:36px;height:40px;background:#fff"></div>
<div class="a" style="left:1804px;top:198px;width:12px;height:40px;background:linear-gradient(270deg,rgba(0,0,0,0.08),rgba(0,0,0,0))"></div>
<svg style="left:1826px;top:208px" width="16" height="20" viewBox="0 0 16 20"><path d="M5.3 5 L10.6 10.3 L5.3 15.6" fill="none" stroke="#1f1f1f" stroke-width="1.8"/></svg>
</body></html>
